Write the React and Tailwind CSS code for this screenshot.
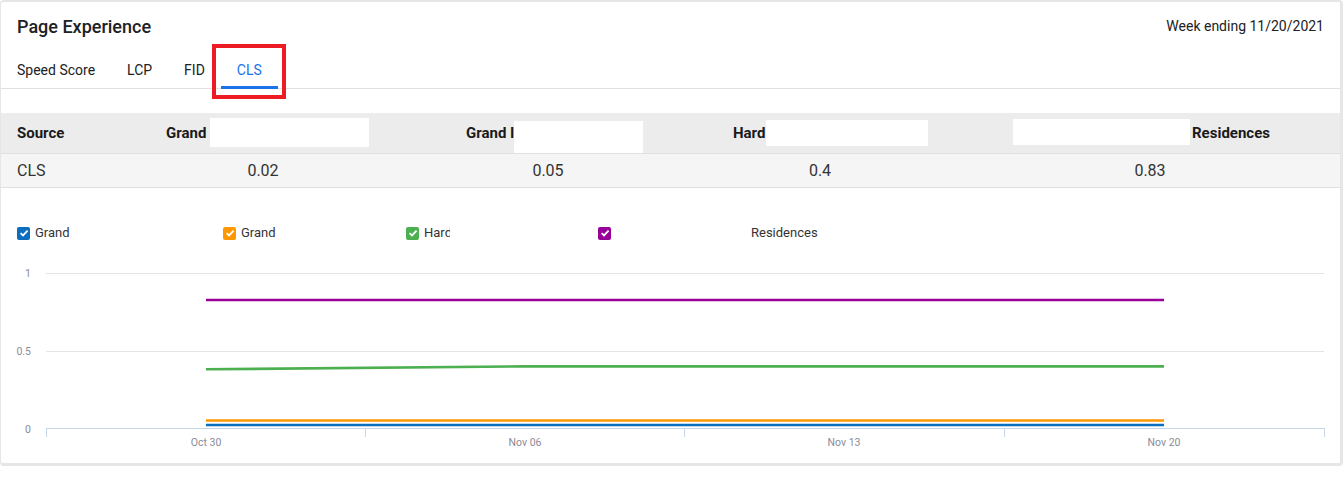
import React from 'react';

const font = { fontFamily: 'Roboto, "Noto Sans", sans-serif' };

const tabs = ['Speed Score', 'LCP', 'FID', 'CLS'];

const legend = [
  { color: 'bg-[#0b6ebf]', label: 'Grand', w: 'w-[206px]', labelCls: '' },
  { color: 'bg-[#ff9800]', label: 'Grand', w: 'w-[183px]', labelCls: '' },
  { color: 'bg-[#4caf50]', label: 'Hard', w: 'w-[192px]', labelCls: 'w-[26px] overflow-hidden' },
  { color: 'bg-[#990099]', label: 'Residences', w: '', labelCls: 'ml-[140px]' },
];

const Check = ({ color }) => (
  <span className={`w-[13px] h-[13px] rounded-[2px] flex items-center justify-center ${color}`}>
    <svg width="10" height="10" viewBox="0 0 10 10">
      <path d="M1.6 5.2 L4 7.4 L8.6 2.6" fill="none" stroke="#fff" strokeWidth="1.8" />
    </svg>
  </span>
);

const Chart = () => {
  const ticks = [46, 365, 684, 1004, 1324];
  const labels = [
    [206, 'Oct 30'],
    [525, 'Nov 06'],
    [844, 'Nov 13'],
    [1164, 'Nov 20'],
  ];
  return (
    <svg className="block w-[1339px] h-[200px]" viewBox="1 260 1339 200">
      <line x1="46" x2="1324" y1="273.5" y2="273.5" stroke="#e4e4e4" />
      <line x1="46" x2="1324" y1="351.5" y2="351.5" stroke="#e4e4e4" />
      <g fill="#8b8b96" fontSize="10.5" textAnchor="end" style={font}>
        <text x="31" y="277">1</text>
        <text x="31" y="355">0.5</text>
        <text x="31" y="433">0</text>
      </g>
      <line x1="46" x2="1324" y1="428.5" y2="428.5" stroke="#c8d6ea" />
      {ticks.map(x => (
        <line key={x} x1={x + 0.5} x2={x + 0.5} y1="428" y2="437" stroke="#c8d6ea" />
      ))}
      <g fill="#8b8b96" fontSize="10.5" textAnchor="middle" style={font}>
        {labels.map(([x, t]) => (
          <text key={t} x={x} y="446">{t}</text>
        ))}
      </g>
      <polyline points="206,300 1164,300" stroke="#990099" strokeWidth="2.6" fill="none" />
      <polyline points="206,369.3 525,366.4 1164,366.4" stroke="#4caf50" strokeWidth="2.6" fill="none" />
      <polyline points="206,420.5 1164,420.5" stroke="#ff9800" strokeWidth="2.6" fill="none" />
      <polyline points="206,425 1164,425" stroke="#0b6ebf" strokeWidth="2.6" fill="none" />
    </svg>
  );
};

export default function App() {
  return (
    <div className="w-[1343px] h-[477px] bg-white text-[#222]" style={font}>
      <div className="h-[466px] border-t-2 border-l border-r-[3px] border-b-[3px] border-[#e6e6e6] rounded-[4px] relative">
        <div className="h-[48px] flex items-center justify-between pl-[16px] pr-[16px]">
          <div className="text-[18px] font-medium text-[#202124]">Page Experience</div>
          <div className="text-[14px] text-[#202124]">Week ending 11/20/2021</div>
        </div>

        <div className="h-[39px] flex border-b border-[#e0e0e0]">
          {tabs.map(t => (
            <div
              key={t}
              className={`px-4 pt-[2px] flex items-center text-[14px] relative ${t === 'CLS' ? 'text-[#1a73e8]' : 'text-[#202124]'}`}
            >
              {t}
              {t === 'CLS' && <span className="absolute left-0 right-0 bottom-[-1px] h-[3px] bg-[#1a73e8]" />}
            </div>
          ))}
        </div>

        <div className="absolute left-[211px] top-[42px] w-[74px] h-[55px] border-4 border-[#ed1c24]" />

        <div className="mt-[24px] h-[40px] bg-[#ececec] flex items-center text-[15px] font-bold text-[#1a1a1a] relative">
          <div className="w-[165px] pl-[16px]">Source</div>
          <div className="w-[300px]">Grand</div>
          <div className="w-[267px]">Grand I</div>
          <div className="w-[280px]">Hard</div>
          <div className="pl-[179px]">Residences</div>
          <div className="absolute bg-white left-[209px] top-[5px] w-[159px] h-[29px]" />
          <div className="absolute bg-white left-[513px] top-[8px] w-[129px] h-[32px]" />
          <div className="absolute bg-white left-[765px] top-[7px] w-[162px] h-[26px]" />
          <div className="absolute bg-white left-[1012px] top-[6px] w-[177px] h-[26px]" />
        </div>

        <div className="h-[35px] bg-[#f5f5f5] border-y border-[#e0e0e0] flex items-center text-[16px] text-[#333]">
          <div className="w-[150px] pl-[16px]">CLS</div>
          <div className="w-[224px] text-center">0.02</div>
          <div className="w-[346px] text-center">0.05</div>
          <div className="w-[198px] text-center">0.4</div>
          <div className="w-[380px] ml-[41px] text-center">0.83</div>
        </div>

        <div className="h-[72px] pt-[37px] pl-[16px] flex text-[13px] text-[#333]">
          {legend.map((l, i) => (
            <div key={i} className={`h-[16px] flex items-center ${l.w}`}>
              <Check color={l.color} />
              <span className={`ml-[5px] whitespace-nowrap ${l.labelCls}`}>{l.label}</span>
            </div>
          ))}
        </div>

        <Chart />
      </div>
    </div>
  );
}
